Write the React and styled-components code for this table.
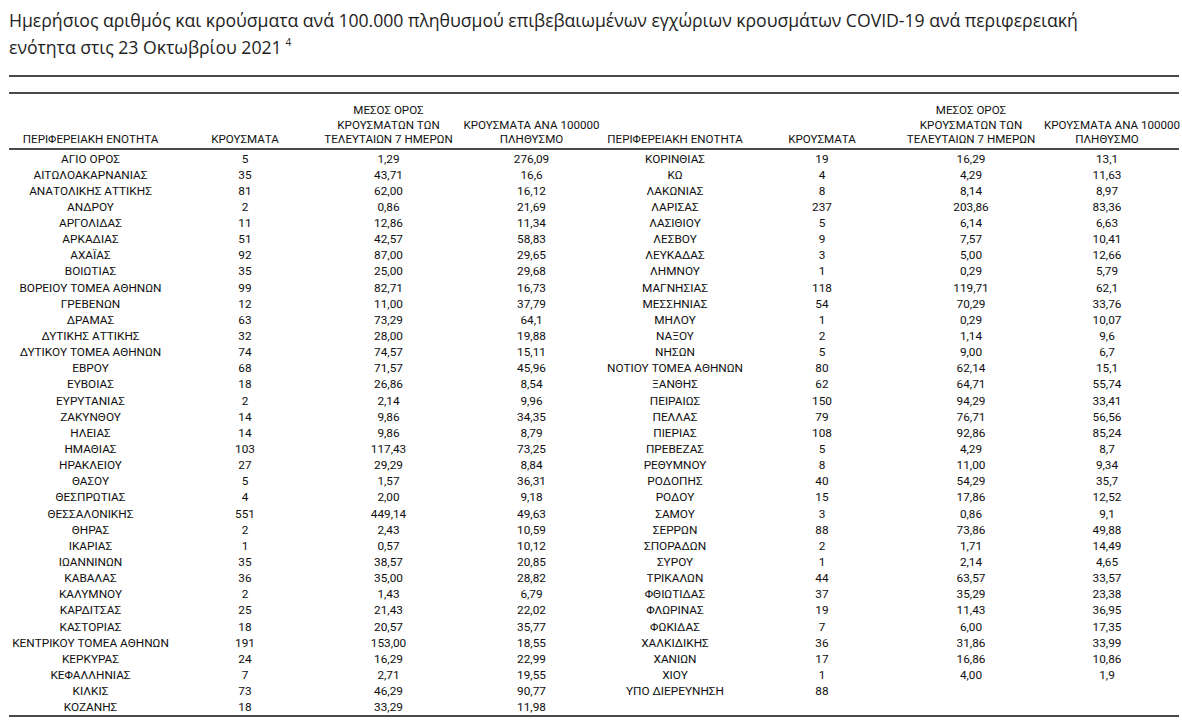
import React from "react";
import styled, { createGlobalStyle } from "styled-components";

const Global = createGlobalStyle`
  html, body { margin: 0; padding: 0; background: #ffffff; }
  body { width: 1182px; height: 721px; overflow: hidden; }
`;

const Page = styled.div`
  box-sizing: border-box;
  width: 1182px;
  padding: 0 3px 0 9px;
`;

const Title = styled.h1`
  margin: 0;
  padding: 7px 0 0 0;
  font-family: "Open Sans", "Noto Sans", sans-serif;
  font-weight: 400;
  font-size: 17.7px;
  line-height: 27px;
  letter-spacing: -0.05px;
  color: #1e1e1e;
  height: 60px;
  box-sizing: border-box;
  white-space: nowrap;
`;

const Sup = styled.sup`
  font-size: 10px;
  line-height: 0;
  vertical-align: 8px;
  margin-left: 4px;
`;

const Rule = styled.div`
  height: ${(p) => p.$h}px;
  background: #4a4a4a;
  margin-top: ${(p) => p.$mt}px;
`;

const COLS = "163px 146px 141px 145px 142px 152px 146px 126px";

const HeaderRow = styled.div`
  display: grid;
  grid-template-columns: ${COLS};
  align-items: end;
  height: 56px;
  border-bottom: 2px solid #4a4a4a;
  box-sizing: border-box;
  padding-bottom: 1px;
`;

const HeadCell = styled.div`
  font-family: "Roboto", "Noto Sans", sans-serif;
  font-size: 11.6px;
  line-height: 14.5px;
  color: #111111;
  text-align: center;
  white-space: nowrap;
`;

const Body = styled.div`
  padding-top: 1px;
  border-bottom: 2px solid #4a4a4a;
`;

const Row = styled.div`
  display: grid;
  grid-template-columns: ${COLS};
  height: 16.15px;
`;

const Cell = styled.div`
  font-family: "Roboto", "Noto Sans", sans-serif;
  font-size: 11.8px;
  line-height: 16.15px;
  color: #0e0e0e;
  text-align: center;
  white-space: nowrap;
`;

const left = [
  ["ΑΓΙΟ ΟΡΟΣ", "5", "1,29", "276,09"],
  ["ΑΙΤΩΛΟΑΚΑΡΝΑΝΙΑΣ", "35", "43,71", "16,6"],
  ["ΑΝΑΤΟΛΙΚΗΣ ΑΤΤΙΚΗΣ", "81", "62,00", "16,12"],
  ["ΑΝΔΡΟΥ", "2", "0,86", "21,69"],
  ["ΑΡΓΟΛΙΔΑΣ", "11", "12,86", "11,34"],
  ["ΑΡΚΑΔΙΑΣ", "51", "42,57", "58,83"],
  ["ΑΧΑΪΑΣ", "92", "87,00", "29,65"],
  ["ΒΟΙΩΤΙΑΣ", "35", "25,00", "29,68"],
  ["ΒΟΡΕΙΟΥ ΤΟΜΕΑ ΑΘΗΝΩΝ", "99", "82,71", "16,73"],
  ["ΓΡΕΒΕΝΩΝ", "12", "11,00", "37,79"],
  ["ΔΡΑΜΑΣ", "63", "73,29", "64,1"],
  ["ΔΥΤΙΚΗΣ ΑΤΤΙΚΗΣ", "32", "28,00", "19,88"],
  ["ΔΥΤΙΚΟΥ ΤΟΜΕΑ ΑΘΗΝΩΝ", "74", "74,57", "15,11"],
  ["ΕΒΡΟΥ", "68", "71,57", "45,96"],
  ["ΕΥΒΟΙΑΣ", "18", "26,86", "8,54"],
  ["ΕΥΡΥΤΑΝΙΑΣ", "2", "2,14", "9,96"],
  ["ΖΑΚΥΝΘΟΥ", "14", "9,86", "34,35"],
  ["ΗΛΕΙΑΣ", "14", "9,86", "8,79"],
  ["ΗΜΑΘΙΑΣ", "103", "117,43", "73,25"],
  ["ΗΡΑΚΛΕΙΟΥ", "27", "29,29", "8,84"],
  ["ΘΑΣΟΥ", "5", "1,57", "36,31"],
  ["ΘΕΣΠΡΩΤΙΑΣ", "4", "2,00", "9,18"],
  ["ΘΕΣΣΑΛΟΝΙΚΗΣ", "551", "449,14", "49,63"],
  ["ΘΗΡΑΣ", "2", "2,43", "10,59"],
  ["ΙΚΑΡΙΑΣ", "1", "0,57", "10,12"],
  ["ΙΩΑΝΝΙΝΩΝ", "35", "38,57", "20,85"],
  ["ΚΑΒΑΛΑΣ", "36", "35,00", "28,82"],
  ["ΚΑΛΥΜΝΟΥ", "2", "1,43", "6,79"],
  ["ΚΑΡΔΙΤΣΑΣ", "25", "21,43", "22,02"],
  ["ΚΑΣΤΟΡΙΑΣ", "18", "20,57", "35,77"],
  ["ΚΕΝΤΡΙΚΟΥ ΤΟΜΕΑ ΑΘΗΝΩΝ", "191", "153,00", "18,55"],
  ["ΚΕΡΚΥΡΑΣ", "24", "16,29", "22,99"],
  ["ΚΕΦΑΛΛΗΝΙΑΣ", "7", "2,71", "19,55"],
  ["ΚΙΛΚΙΣ", "73", "46,29", "90,77"],
  ["ΚΟΖΑΝΗΣ", "18", "33,29", "11,98"],
];

const right = [
  ["ΚΟΡΙΝΘΙΑΣ", "19", "16,29", "13,1"],
  ["ΚΩ", "4", "4,29", "11,63"],
  ["ΛΑΚΩΝΙΑΣ", "8", "8,14", "8,97"],
  ["ΛΑΡΙΣΑΣ", "237", "203,86", "83,36"],
  ["ΛΑΣΙΘΙΟΥ", "5", "6,14", "6,63"],
  ["ΛΕΣΒΟΥ", "9", "7,57", "10,41"],
  ["ΛΕΥΚΑΔΑΣ", "3", "5,00", "12,66"],
  ["ΛΗΜΝΟΥ", "1", "0,29", "5,79"],
  ["ΜΑΓΝΗΣΙΑΣ", "118", "119,71", "62,1"],
  ["ΜΕΣΣΗΝΙΑΣ", "54", "70,29", "33,76"],
  ["ΜΗΛΟΥ", "1", "0,29", "10,07"],
  ["ΝΑΞΟΥ", "2", "1,14", "9,6"],
  ["ΝΗΣΩΝ", "5", "9,00", "6,7"],
  ["ΝΟΤΙΟΥ ΤΟΜΕΑ ΑΘΗΝΩΝ", "80", "62,14", "15,1"],
  ["ΞΑΝΘΗΣ", "62", "64,71", "55,74"],
  ["ΠΕΙΡΑΙΩΣ", "150", "94,29", "33,41"],
  ["ΠΕΛΛΑΣ", "79", "76,71", "56,56"],
  ["ΠΙΕΡΙΑΣ", "108", "92,86", "85,24"],
  ["ΠΡΕΒΕΖΑΣ", "5", "4,29", "8,7"],
  ["ΡΕΘΥΜΝΟΥ", "8", "11,00", "9,34"],
  ["ΡΟΔΟΠΗΣ", "40", "54,29", "35,7"],
  ["ΡΟΔΟΥ", "15", "17,86", "12,52"],
  ["ΣΑΜΟΥ", "3", "0,86", "9,1"],
  ["ΣΕΡΡΩΝ", "88", "73,86", "49,88"],
  ["ΣΠΟΡΑΔΩΝ", "2", "1,71", "14,49"],
  ["ΣΥΡΟΥ", "1", "2,14", "4,65"],
  ["ΤΡΙΚΑΛΩΝ", "44", "63,57", "33,57"],
  ["ΦΘΙΩΤΙΔΑΣ", "37", "35,29", "23,38"],
  ["ΦΛΩΡΙΝΑΣ", "19", "11,43", "36,95"],
  ["ΦΩΚΙΔΑΣ", "7", "6,00", "17,35"],
  ["ΧΑΛΚΙΔΙΚΗΣ", "36", "31,86", "33,99"],
  ["ΧΑΝΙΩΝ", "17", "16,86", "10,86"],
  ["ΧΙΟΥ", "1", "4,00", "1,9"],
  ["ΥΠΟ ΔΙΕΡΕΥΝΗΣΗ", "88", "", ""],
];

const headers = [
  ["ΠΕΡΙΦΕΡΕΙΑΚΗ ΕΝΟΤΗΤΑ"],
  ["ΚΡΟΥΣΜΑΤΑ"],
  ["ΜΕΣΟΣ ΟΡΟΣ", "ΚΡΟΥΣΜΑΤΩΝ ΤΩΝ", "ΤΕΛΕΥΤΑΙΩΝ 7 ΗΜΕΡΩΝ"],
  ["ΚΡΟΥΣΜΑΤΑ ΑΝΑ 100000", "ΠΛΗΘΥΣΜΟ"],
];

export default function App() {
  const rows = left.map((l, i) => [...l, ...(right[i] || ["", "", "", ""])]);
  const allHeaders = [...headers, ...headers];
  return (
    <>
      <Global />
      <Page>
        <Title>
          Ημερήσιος αριθμός και κρούσματα ανά 100.000 πληθυσμού επιβεβαιωμένων εγχώριων κρουσμάτων COVID-19 ανά περιφερειακή
          <br />
          ενότητα στις 23 Οκτωβρίου 2021<Sup>4</Sup>
        </Title>
        <Rule $h={1.5} $mt={15} />
        <Rule $h={2} $mt={15} />
        <HeaderRow>
          {allHeaders.map((h, i) => (
            <HeadCell key={i}>
              {h.map((line, j) => (
                <div key={j}>{line}</div>
              ))}
            </HeadCell>
          ))}
        </HeaderRow>
        <Body>
          {rows.map((r, i) => (
            <Row key={i}>
              {r.map((c, j) => (
                <Cell key={j}>{c}</Cell>
              ))}
            </Row>
          ))}
        </Body>
      </Page>
    </>
  );
}
